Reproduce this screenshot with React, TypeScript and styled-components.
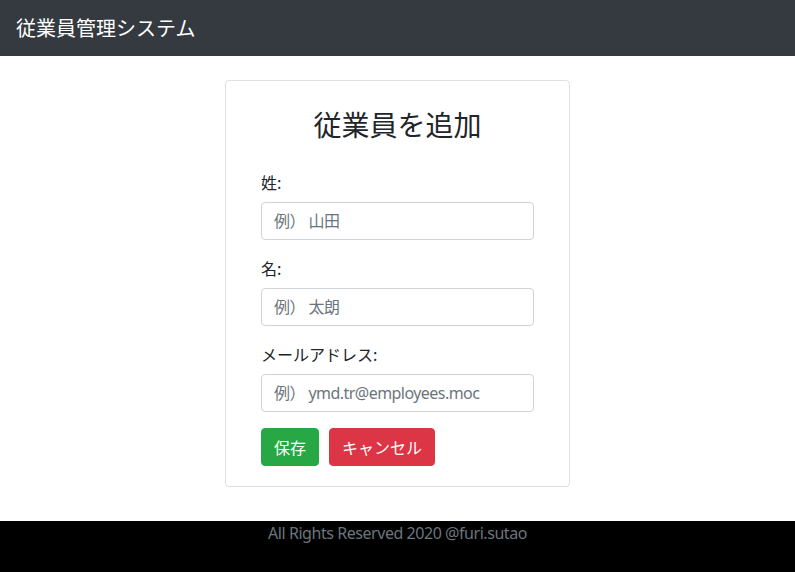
import React from 'react'
import styled, { createGlobalStyle } from 'styled-components'

const GlobalStyle = createGlobalStyle`
  * { box-sizing: border-box; }
  html, body {
    margin: 0;
    padding: 0;
  }
  body {
    font-family: "Noto Sans", "Noto Sans CJK JP", sans-serif;
    font-size: 16px;
    line-height: 1.5;
    color: #212529;
    background: #fff;
  }
`

const Page = styled.div`
  min-height: 100vh;
  display: flex;
  flex-direction: column;
`

const NavBar = styled.header`
  height: 56px;
  background-color: #343a40;
  display: flex;
  align-items: center;
  padding: 0 16px;
`

const Brand = styled.div`
  color: #fff;
  font-family: "Noto Sans CJK JP", sans-serif;
  font-size: 20px;
  line-height: 30px;
`

const Main = styled.main`
  flex: 1;
  display: flex;
  justify-content: center;
  padding: 24px 0 34px 0;
`

const Card = styled.div`
  width: 345px;
  border: 1px solid rgba(0, 0, 0, 0.125);
  border-radius: 4px;
  padding: 27px 35px 20px 35px;
`

const Title = styled.h3`
  margin: 0 0 28px 0;
  text-align: center;
  font-family: "Noto Sans CJK JP", sans-serif;
  font-weight: 400;
  font-size: 28px;
  line-height: 33.6px;
`

const FormGroup = styled.div`
  margin-bottom: 16px;
`

const Label = styled.label`
  display: block;
  margin-bottom: 8px;
  font-family: "Noto Sans CJK JP", sans-serif;
  font-size: 16px;
  line-height: 24px;
`

const Input = styled.input`
  display: block;
  width: 100%;
  height: 38px;
  padding: 6px 12px;
  font-family: "Noto Sans", "Noto Sans CJK JP", sans-serif;
  font-size: 16px;
  line-height: 24px;
  letter-spacing: -0.55px;
  color: #495057;
  background: #fff;
  border: 1px solid #ced4da;
  border-radius: 4px;
  outline: none;

  &::placeholder {
    color: #6c757d;
    opacity: 1;
  }
`

const Actions = styled.div`
  display: flex;
  gap: 10px;
`

const Button = styled.button<{ $variant: 'success' | 'danger' }>`
  height: 38px;
  padding: 6px 12px;
  font-family: "Noto Sans CJK JP", sans-serif;
  font-size: 16px;
  line-height: 24px;
  color: #fff;
  border-radius: 4px;
  cursor: pointer;
  background-color: ${(p) => (p.$variant === 'success' ? '#28a745' : '#dc3545')};
  border: 1px solid ${(p) => (p.$variant === 'success' ? '#28a745' : '#dc3545')};
`

const Footer = styled.footer`
  height: 51px;
  background-color: #000;
  color: #6c757d;
  text-align: center;
  font-size: 16px;
  line-height: 24px;
  letter-spacing: -0.45px;
`

const fields = [
  { label: '姓:', placeholder: '例） 山田' },
  { label: '名:', placeholder: '例） 太朗' },
  { label: 'メールアドレス:', placeholder: '例） ymd.tr@employees.moc' },
]

const App = () => {
  return (
    <>
      <GlobalStyle />
      <Page>
        <NavBar>
          <Brand>従業員管理システム</Brand>
        </NavBar>
        <Main>
          <Card>
            <Title>従業員を追加</Title>
            <form onSubmit={(e) => e.preventDefault()}>
              {fields.map((f) => (
                <FormGroup key={f.label}>
                  <Label>{f.label}</Label>
                  <Input placeholder={f.placeholder} />
                </FormGroup>
              ))}
              <Actions>
                <Button $variant='success'>保存</Button>
                <Button $variant='danger' type='button'>
                  キャンセル
                </Button>
              </Actions>
            </form>
          </Card>
        </Main>
        <Footer>All Rights Reserved 2020 @furi.sutao</Footer>
      </Page>
    </>
  )
}

export default App
